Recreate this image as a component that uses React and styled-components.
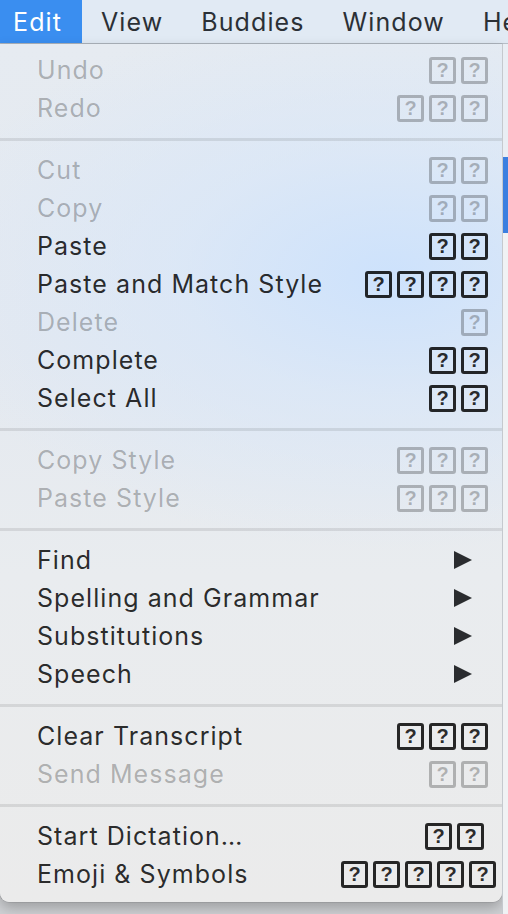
import React from 'react'
import styled, { createGlobalStyle } from 'styled-components'

const GlobalStyle = createGlobalStyle`
  html, body {
    margin: 0;
    padding: 0;
    background: #c9cbce;
  }
  #root {
    width: 508px;
    height: 914px;
    overflow: hidden;
  }
`

const Page = styled.div`
  width: 508px;
  height: 914px;
  display: flex;
  flex-direction: column;
  font-family: Inter, "Liberation Sans", sans-serif;
  background: linear-gradient(to bottom, #e5e9ee 0%, #d0d2d5 100%);
`

const MenuBar = styled.div`
  height: 43px;
  display: flex;
  align-items: stretch;
  background: #e1eaf4;
  border-bottom: 1px solid #b9c1ca;
  flex-shrink: 0;
  overflow: hidden;
`

const BarItem = styled.div`
  display: flex;
  align-items: center;
  padding: 0 ${p => p.$right || 19}px 0 ${p => p.$left || 19}px;
  font-size: 25px;
  color: ${p => (p.$active ? '#ffffff' : '#2b3036')};
  background: ${p => (p.$active ? '#3a8ef0' : 'transparent')};
  white-space: nowrap;
  letter-spacing: 1.1px;
`

const Body = styled.div`
  display: flex;
  flex: 1;
  align-items: flex-start;
`

const Panel = styled.div`
  width: 502px;
  padding: 7px 0 9px;
  border-radius: 0 0 9px 9px;
  box-shadow: 0 6px 14px rgba(0, 0, 0, 0.25), 0 0 0 0.5px rgba(0, 0, 0, 0.15);
  background:
    radial-gradient(ellipse 95% 32% at 78% 27%, rgba(205, 226, 252, 1) 0%, rgba(214, 230, 250, 0.6) 45%, rgba(230, 236, 243, 0) 100%),
    linear-gradient(to bottom, #e6ebf1 0%, #e4e9f0 35%, #e9ecef 62%, #ebebeb 100%);
  flex-shrink: 0;
`

const SideStrip = styled.div`
  flex: 1;
  align-self: stretch;
  display: flex;
  flex-direction: column;
  background: #eef1f4;
  border-left: 1px solid #c5c9ce;
`

const StripBlock = styled.div`
  height: ${p => p.$h}px;
  background: ${p => p.$bg};
`

const Row = styled.div`
  height: 38px;
  display: flex;
  align-items: center;
  justify-content: space-between;
  padding: 0 ${p => p.$right || 14}px 0 37px;
`

const Label = styled.span`
  font-size: 25px;
  letter-spacing: 1.05px;
  color: ${p => (p.$disabled ? 'rgba(0, 0, 0, 0.27)' : 'rgba(0, 0, 0, 0.84)')};
  white-space: nowrap;
`

const Keys = styled.div`
  display: flex;
  gap: 5px;
`

const Key = styled.span`
  width: 27px;
  height: 27px;
  box-sizing: border-box;
  border: 3px solid ${p => (p.$disabled ? 'rgba(0, 0, 0, 0.25)' : 'rgba(0, 0, 0, 0.84)')};
  border-radius: 3px;
  display: flex;
  align-items: center;
  justify-content: center;
  font-family: "Liberation Sans", Arial, sans-serif;
  font-weight: 700;
  font-size: 20px;
  line-height: 1;
  color: ${p => (p.$disabled ? 'rgba(0, 0, 0, 0.25)' : 'rgba(0, 0, 0, 0.84)')};
`

const Separator = styled.div`
  height: 24px;
  display: flex;
  align-items: center;

  &::after {
    content: '';
    display: block;
    width: 100%;
    height: 3px;
    background: rgba(0, 0, 0, 0.09);
  }
`

const Arrow = styled.svg`
  width: 18px;
  height: 18px;
  margin-right: 16px;
`

const sections = [
  [
    { label: 'Undo', keys: 2, disabled: true },
    { label: 'Redo', keys: 3, disabled: true },
  ],
  [
    { label: 'Cut', keys: 2, disabled: true },
    { label: 'Copy', keys: 2, disabled: true },
    { label: 'Paste', keys: 2 },
    { label: 'Paste and Match Style', keys: 4 },
    { label: 'Delete', keys: 1, disabled: true },
    { label: 'Complete', keys: 2 },
    { label: 'Select All', keys: 2 },
  ],
  [
    { label: 'Copy Style', keys: 3, disabled: true },
    { label: 'Paste Style', keys: 3, disabled: true },
  ],
  [
    { label: 'Find', sub: true },
    { label: 'Spelling and Grammar', sub: true },
    { label: 'Substitutions', sub: true },
    { label: 'Speech', sub: true },
  ],
  [
    { label: 'Clear Transcript', keys: 3 },
    { label: 'Send Message', keys: 2, disabled: true },
  ],
  [
    { label: 'Start Dictation…', keys: 2, right: 18 },
    { label: 'Emoji & Symbols', keys: 5, right: 6 },
  ],
]

function MenuRow({ item }) {
  return (
    <Row $right={item.right}>
      <Label $disabled={item.disabled}>{item.label}</Label>
      {item.sub ? (
        <Arrow viewBox="0 0 18 18">
          <polygon points="0,0 18,9 0,18" fill="#2a2c2f" />
        </Arrow>
      ) : (
        <Keys>
          {Array.from({ length: item.keys }).map((_, i) => (
            <Key key={i} $disabled={item.disabled}>?</Key>
          ))}
        </Keys>
      )}
    </Row>
  )
}

export default function App() {
  return (
    <Page>
      <GlobalStyle />
      <MenuBar>
        <BarItem $active $left={13} $right={20}>Edit</BarItem>
        <BarItem>View</BarItem>
        <BarItem>Buddies</BarItem>
        <BarItem>Window</BarItem>
        <BarItem>Help</BarItem>
      </MenuBar>
      <Body>
        <Panel>
          {sections.map((section, si) => (
            <React.Fragment key={si}>
              {si > 0 && <Separator />}
              {section.map(item => (
                <MenuRow key={item.label} item={item} />
              ))}
            </React.Fragment>
          ))}
        </Panel>
        <SideStrip>
          <StripBlock $h={113} $bg="#e9eef4" />
          <StripBlock $h={76} $bg="#3b7fe0" />
          <StripBlock $h={680} $bg="#f0f2f4" />
        </SideStrip>
      </Body>
    </Page>
  )
}
